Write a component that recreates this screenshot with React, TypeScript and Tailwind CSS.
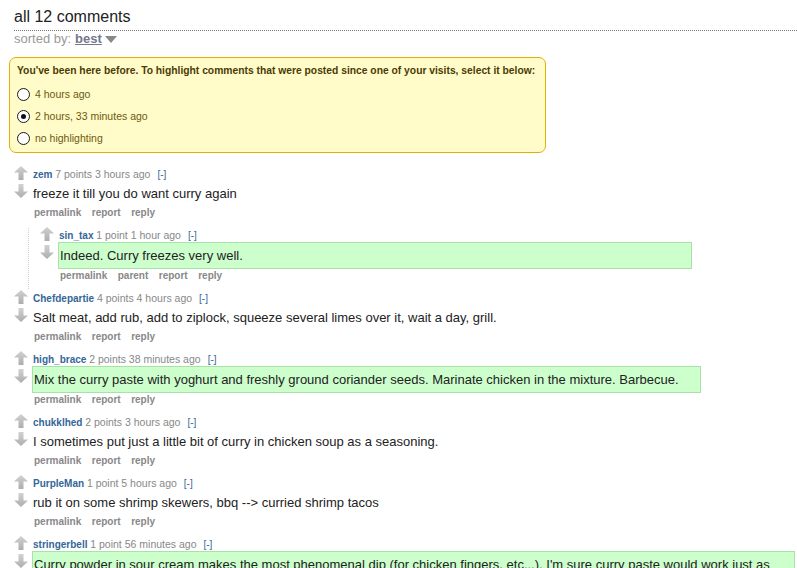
import type { ReactNode } from "react";

interface CommentData {
  author: string;
  points: string;
  time: string;
  body: string;
  isNew?: boolean;
  boxClass?: string;
  showParent?: boolean;
  replies?: CommentData[];
}

const comments: CommentData[] = [
  {
    author: "zem",
    points: "7 points",
    time: "3 hours ago",
    body: "freeze it till you do want curry again",
    replies: [
      {
        author: "sin_tax",
        points: "1 point",
        time: "1 hour ago",
        body: "Indeed. Curry freezes very well.",
        isNew: true,
        boxClass: "w-[634px]",
        showParent: true,
      },
    ],
  },
  {
    author: "Chefdepartie",
    points: "4 points",
    time: "4 hours ago",
    body: "Salt meat, add rub, add to ziplock, squeeze several limes over it, wait a day, grill.",
  },
  {
    author: "high_brace",
    points: "2 points",
    time: "38 minutes ago",
    body: "Mix the curry paste with yoghurt and freshly ground coriander seeds. Marinate chicken in the mixture. Barbecue.",
    isNew: true,
    boxClass: "w-[669px]",
  },
  {
    author: "chukklhed",
    points: "2 points",
    time: "3 hours ago",
    body: "I sometimes put just a little bit of curry in chicken soup as a seasoning.",
  },
  {
    author: "PurpleMan",
    points: "1 point",
    time: "5 hours ago",
    body: "rub it on some shrimp skewers, bbq --> curried shrimp tacos",
  },
  {
    author: "stringerbell",
    points: "1 point",
    time: "56 minutes ago",
    body: "Curry powder in sour cream makes the most phenomenal dip (for chicken fingers, etc...). I'm sure curry paste would work just as well.",
    isNew: true,
    boxClass: "w-[763px]",
  },
];

function Arrow({ down }: { down?: boolean }) {
  return (
    <svg width="14" height="14" viewBox="0 0 14 14" className="block">
      <defs>
        <linearGradient id="arrowGrad" x1="0" y1="0" x2="0" y2="1">
          <stop offset="0" stopColor="#d2d2d2" />
          <stop offset="1" stopColor="#adadad" />
        </linearGradient>
      </defs>
      {down ? (
        <path d="M4.5 0 L9.5 0 L9.5 7.5 L14 7.5 L7 14 L0 7.5 L4.5 7.5 Z" fill="url(#arrowGrad)" />
      ) : (
        <path d="M7 0 L14 6.5 L9.5 6.5 L9.5 14 L4.5 14 L4.5 6.5 L0 6.5 Z" fill="url(#arrowGrad)" />
      )}
    </svg>
  );
}

function Radio({ checked, children }: { checked?: boolean; children: ReactNode }) {
  return (
    <div className="flex h-[22px] items-center">
      <span className="flex h-[13px] w-[13px] items-center justify-center rounded-full border-[1.5px] border-[#1a1a1a] bg-white">
        {checked && <span className="h-[5px] w-[5px] rounded-full bg-[#111]" />}
      </span>
      <span className="ml-[5px] text-[10.5px] leading-[14px] text-[#6e5810]">{children}</span>
    </div>
  );
}

function Comment({ c }: { c: CommentData }) {
  return (
    <div>
      <div className="flex">
        <div className="-mt-[2px] mr-[5px] flex w-[14px] flex-col gap-[4px]">
          <Arrow />
          <Arrow down />
        </div>
        <div className="min-w-0 flex-1">
          <div className="h-[13px] whitespace-nowrap text-[10px] leading-[12px]">
            <span className="font-bold text-[#369]">{c.author}</span>{" "}
            <span className="text-[10.5px] text-[#888]">
              {c.points} {c.time}
            </span>
            <span className="ml-[7px] text-[#369]">[-]</span>
          </div>
          {c.isNew ? (
            <div
              className={`-ml-[1px] border border-[#a9e2a9] bg-[#ccffcc] py-[5px] pl-[1px] pr-[4px] text-[13px] leading-[15px] text-[#222] ${c.boxClass}`}
            >
              {c.body}
            </div>
          ) : (
            <div className="py-[5px] text-[13px] leading-[15px] text-[#222]">{c.body}</div>
          )}
          <div className="flex h-[14px] gap-[10.5px] pl-[1px] text-[10px] font-bold leading-[14px] text-[#888]">
            <span>permalink</span>
            {c.showParent && <span>parent</span>}
            <span>report</span>
            <span>reply</span>
          </div>
        </div>
      </div>
      {c.replies && (
        <div className="ml-[14px] mt-[8px] -mb-[6px] border-l border-dotted border-[#cfcfd8] pb-[6px] pl-[11px] pt-[1px]">
          {c.replies.map((r) => (
            <Comment key={r.author} c={r} />
          ))}
        </div>
      )}
    </div>
  );
}

export default function App() {
  return (
    <div className="min-h-screen bg-white pl-[9px] font-['Liberation_Sans',Arial,sans-serif]">
      {/* Header */}
      <div className="ml-[5px] border-b border-dotted border-[#777] pb-[3px] pt-[7px] text-[16px] leading-[20px] text-[#222]">
        all 12 comments
      </div>
      <div className="ml-[5px] flex h-[16px] items-center text-[13px] leading-[16px] text-[#999]">
        <span>sorted by:</span>
        <span className="ml-[4px] font-bold text-[#75778a] underline">best</span>
        <svg width="12" height="7" viewBox="0 0 12 7" className="ml-[3px] mt-[1px]">
          <path d="M0 0 L12 0 L6 7 Z" fill="#888" />
        </svg>
      </div>

      {/* Visits box */}
      <div className="mt-[10px] w-[537px] rounded-[7px] border border-[#e0b00a] bg-[#fffcc9] pb-[3px] pl-[7px] pt-[6px]">
        <div className="whitespace-nowrap text-[10.3px] font-bold leading-[14px] text-[#4b3a05]">
          You've been here before. To highlight comments that were posted since one of your visits, select it below:
        </div>
        <div className="mt-[5px]">
          <Radio>4 hours ago</Radio>
          <Radio checked>2 hours, 33 minutes ago</Radio>
          <Radio>no highlighting</Radio>
        </div>
      </div>

      {/* Comments */}
      <div className="ml-[5px] mt-[15px]">
        {comments.map((c) => (
          <div key={c.author} className="mb-[9px]">
            <Comment c={c} />
          </div>
        ))}
      </div>
    </div>
  );
}
